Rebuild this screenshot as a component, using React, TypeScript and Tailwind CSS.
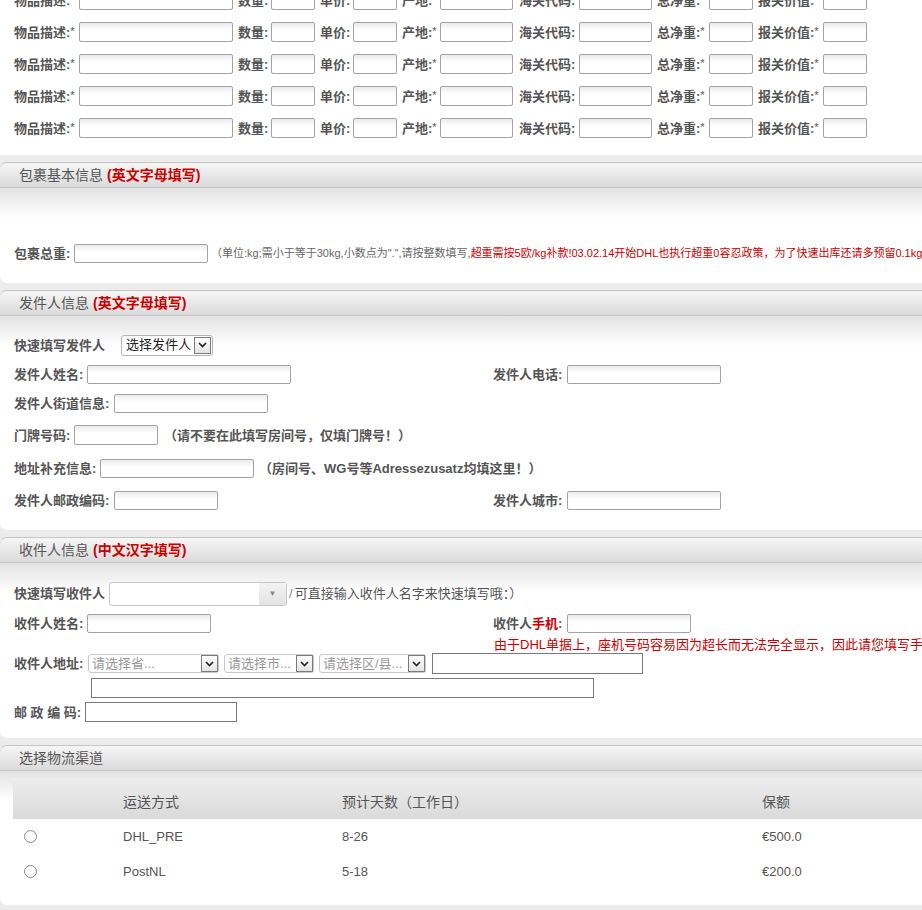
import React from "react";

const lbl = "shrink-0 text-[13px] font-bold text-[#555] whitespace-nowrap leading-none";
const star = <span className="font-normal text-[11px] align-top">*</span>;

function Box({ className }: { className: string }) {
  return (
    <span
      className={`inline-block shrink-0 border border-[#a3a3a3] rounded-[2px] bg-[linear-gradient(to_bottom,#ebebeb,#ffffff_7px)] ${className}`}
    />
  );
}

function Plain({ className }: { className: string }) {
  return <span className={`inline-block shrink-0 border border-[#7a7a7a] bg-white ${className}`} />;
}

function Arrow() {
  return (
    <span className="flex h-[17px] w-[17px] shrink-0 items-center justify-center border border-[#7b7b7b] bg-[linear-gradient(#ffffff,#e4e4e4)]">
      <svg width="9" height="6" viewBox="0 0 9 6">
        <path d="M1 1l3.5 3.5L8 1" stroke="#222" strokeWidth="1.7" fill="none" />
      </svg>
    </span>
  );
}

function Pick({ text, className }: { text: string; className: string }) {
  return (
    <span
      className={`flex h-[19px] shrink-0 items-center justify-between rounded-[3px] border border-[#c9c9c9] bg-white pl-[3px] ${className}`}
    >
      <span className="text-[13px] text-[#999] whitespace-nowrap overflow-hidden">{text}</span>
      <Arrow />
    </span>
  );
}

function Section({
  title,
  note,
  children,
  body,
}: {
  title: string;
  note?: string;
  children: React.ReactNode;
  body: string;
}) {
  return (
    <div className="bg-[#ececec] pt-[7px]">
      <div className="flex h-[26px] items-center rounded-tl-[7px] border-t border-b border-t-[#c4c4c4] border-b-[#c6c6c6] bg-[linear-gradient(to_bottom,#f6f6f6,#dadada)] pl-[19px]">
        <span className="text-[14px] text-[#555] whitespace-nowrap">{title}</span>
        {note && (
          <span className="ml-[4px] text-[14px] font-bold text-[#cc0000] whitespace-nowrap">{note}</span>
        )}
      </div>
      <div className={`rounded-bl-[7px] bg-[linear-gradient(to_bottom,#e3e3e3,#ffffff_30px)] ${body}`}>
        {children}
      </div>
    </div>
  );
}

function ItemRow() {
  return (
    <div className="flex h-8 items-center pl-[14px]">
      <span className={`${lbl} w-[65px]`}>物品描述:{star}</span>
      <Box className="w-[154px] h-[20px]" />
      <span className={`${lbl} ml-[5px] w-[33px]`}>数量:</span>
      <Box className="w-[44px] h-[20px]" />
      <span className={`${lbl} ml-[5px] w-[33px]`}>单价:</span>
      <Box className="w-[44px] h-[20px]" />
      <span className={`${lbl} ml-[5px] w-[38px]`}>产地:{star}</span>
      <Box className="w-[73px] h-[20px]" />
      <span className={`${lbl} ml-[6px] w-[60px]`}>海关代码:</span>
      <Box className="w-[73px] h-[20px]" />
      <span className={`${lbl} ml-[5px] w-[52px]`}>总净重:{star}</span>
      <Box className="w-[44px] h-[20px]" />
      <span className={`${lbl} ml-[5px] w-[65px]`}>报关价值:{star}</span>
      <Box className="w-[44px] h-[20px]" />
    </div>
  );
}

export default function App() {
  return (
    <div className="w-[922px] h-[910px] overflow-hidden bg-white font-['Liberation_Sans','Noto_Sans_CJK_SC',sans-serif]">
      <div className="-mt-4 pb-[11px]">
        {[0, 1, 2, 3, 4].map((i) => (
          <ItemRow key={i} />
        ))}
      </div>

      <Section title="包裹基本信息" note="(英文字母填写)" body="pt-[56px] pb-[20px]">
        <div className="flex h-[19px] items-center pl-[14px]">
          <span className={`${lbl} w-[60px]`}>包裹总重:</span>
          <Box className="w-[134px] h-[19px]" />
          <span className="ml-[3px] shrink-0 text-[11px] text-[#666] whitespace-nowrap">
            （单位:kg;需小于等于30kg,小数点为".",请按整数填写,
            <span className="text-[#cc0000]">
              超重需按5欧/kg补款!03.02.14开始DHL也执行超重0容忍政策，为了快速出库还请多预留0.1kg
            </span>
          </span>
        </div>
      </Section>

      <Section title="发件人信息" note="(英文字母填写)" body="pt-[15px] pb-[14px] pl-[14px]">
        <div className="flex h-[28px] items-center">
          <span className={`${lbl} w-[107px]`}>快速填写发件人</span>
          <span className="flex h-[21px] w-[92px] items-center justify-between rounded-[3px] border border-[#b5b5b5] bg-white pl-[4px] pr-[1px]">
            <span className="text-[13px] text-[#222] whitespace-nowrap">选择发件人</span>
            <Arrow />
          </span>
        </div>
        <div className="flex h-[30px] items-center">
          <div className="flex w-[479px] shrink-0 items-center">
            <span className={`${lbl} w-[73px]`}>发件人姓名:</span>
            <Box className="w-[204px] h-[19px]" />
          </div>
          <span className={`${lbl} w-[74px]`}>发件人电话:</span>
          <Box className="w-[154px] h-[19px]" />
        </div>
        <div className="flex h-[29px] items-center">
          <span className={`${lbl} w-[100px]`}>发件人街道信息:</span>
          <Box className="w-[154px] h-[19px]" />
        </div>
        <div className="flex h-[34px] items-center">
          <span className={`${lbl} w-[60px]`}>门牌号码:</span>
          <Box className="w-[84px] h-[20px]" />
          <span className={`${lbl} ml-[6px]`}>（请不要在此填写房间号，仅填门牌号！）</span>
        </div>
        <div className="flex h-[32px] items-center">
          <span className={`${lbl} w-[86px]`}>地址补充信息:</span>
          <Box className="w-[154px] h-[19px]" />
          <span className={`${lbl} ml-[5px]`}>（房间号、WG号等Adressezusatz均填这里！）</span>
        </div>
        <div className="flex h-[32px] items-center">
          <div className="flex w-[479px] shrink-0 items-center">
            <span className={`${lbl} w-[100px]`}>发件人邮政编码:</span>
            <Box className="w-[104px] h-[19px]" />
          </div>
          <span className={`${lbl} w-[74px]`}>发件人城市:</span>
          <Box className="w-[154px] h-[19px]" />
        </div>
      </Section>

      <Section title="收件人信息" note="(中文汉字填写)" body="pt-[17px] pb-[16px] pl-[14px]">
        <div className="flex h-[27px] items-center">
          <span className={`${lbl} w-[95px]`}>快速填写收件人</span>
          <span className="relative z-10 flex h-[24px] w-[178px] shrink-0 items-stretch justify-end rounded-[3px] border border-[#c6c6c6] bg-white">
            <span className="flex w-[27px] items-center justify-center bg-[linear-gradient(#f3f3f3,#e3e3e3)]">
              <span className="text-[8px] text-[#888]">▼</span>
            </span>
          </span>
          <span className="shrink-0 text-[13px] text-[#555] whitespace-nowrap">
            <span className="mx-[2px] text-[#888]">/</span>可直接输入收件人名字来快速填写哦：）
          </span>
        </div>
        <div className="mt-[7px] flex items-start">
          <div className="flex w-[479px] shrink-0 items-center">
            <span className={`${lbl} w-[73px]`}>收件人姓名:</span>
            <Box className="w-[124px] h-[19px]" />
          </div>
          <div className="flex shrink-0 flex-col">
            <div className="flex h-[19px] items-center">
              <span className={`${lbl} w-[74px]`}>
                收件人<span className="text-[#cc0000]">手机</span>:
              </span>
              <Box className="w-[124px] h-[19px]" />
            </div>
            <span className="mt-[5px] ml-[1px] text-[13px] leading-[14px] text-[#cc0000] whitespace-nowrap">
              由于DHL单据上，座机号码容易因为超长而无法完全显示，因此请您填写手机号码！
            </span>
          </div>
        </div>
        <div className="mt-[1px] flex h-[21px] items-center">
          <span className={`${lbl} w-[74px]`}>收件人地址:</span>
          <Pick text="请选择省..." className="w-[131px]" />
          <Pick text="请选择市..." className="ml-[5px] w-[90px]" />
          <Pick text="请选择区/县..." className="ml-[5px] w-[107px]" />
          <Plain className="ml-[6px] w-[211px] h-[21px]" />
        </div>
        <div className="mt-[4px] flex h-[20px] pl-[77px]">
          <Plain className="w-[503px] h-[20px]" />
        </div>
        <div className="mt-[4px] flex h-[20px] items-center">
          <span className={`${lbl} w-[71px]`}>邮 政 编 码:</span>
          <Plain className="w-[152px] h-[20px]" />
        </div>
      </Section>

      <Section title="选择物流渠道" body="pt-[7px] pb-[16px] pl-[13px]">
        <div className="flex h-[41px] items-center bg-[linear-gradient(to_bottom,#ededed,#dadada)] pt-[7px] text-[14px] text-[#555]">
          <span className="w-[110px] shrink-0" />
          <span className="w-[219px] shrink-0">运送方式</span>
          <span className="w-[420px] shrink-0 whitespace-nowrap">预计天数（工作日）</span>
          <span>保额</span>
        </div>
        {[
          ["DHL_PRE", "8-26", "€500.0"],
          ["PostNL", "5-18", "€200.0"],
        ].map(([a, b, c]) => (
          <div key={a} className="flex h-[35px] items-center text-[13px] text-[#555]">
            <span className="w-[110px] shrink-0 pl-[11px]">
              <span className="block h-[13px] w-[13px] rounded-full border border-[#8a8a8a] bg-white" />
            </span>
            <span className="w-[219px] shrink-0">{a}</span>
            <span className="w-[420px] shrink-0">{b}</span>
            <span>{c}</span>
          </div>
        ))}
      </Section>
      <div className="h-[5px] bg-[#ececec]" />
    </div>
  );
}
